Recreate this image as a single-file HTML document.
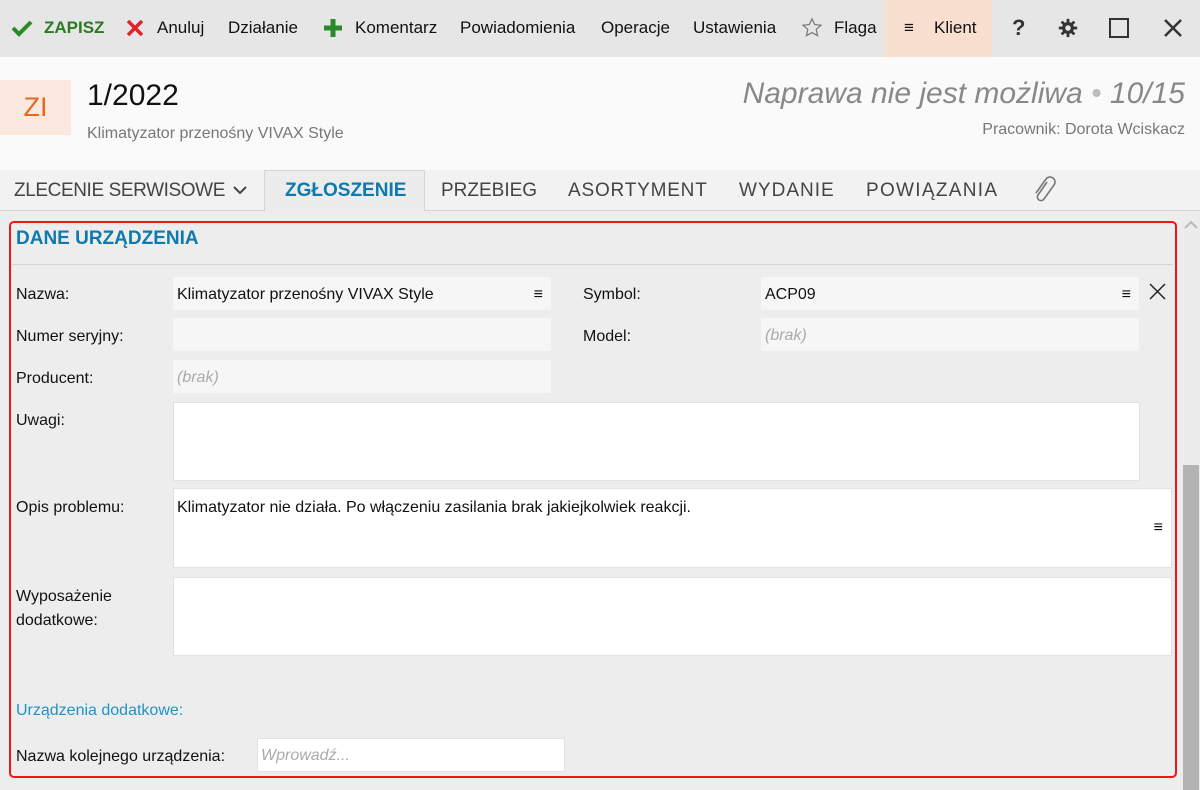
<!DOCTYPE html>
<html><head><meta charset="utf-8"><style>
*{box-sizing:border-box;margin:0;padding:0}
body{width:1200px;height:790px;overflow:hidden;background:#ededed;font-family:"Liberation Sans",sans-serif;color:#111;position:relative}
.a{position:absolute;white-space:nowrap}
.tb{left:0;top:0;width:1200px;height:57px;background:#e6e6e6}
.tb span{position:absolute;top:18px;font-size:17px}
.hd{left:0;top:57px;width:1200px;height:113px;background:#fafafa}
.tabs{left:0;top:170px;width:1200px;height:41px;background:#f2f2f2;border-bottom:1px solid #d6d6d6}
.tab{position:absolute;top:10px;font-size:19px;color:#444}
.lbl{font-size:16px;color:#111}
.in{position:absolute;background:#f6f6f6;height:33px;font-size:16px;padding:8px 4px}
.ta{position:absolute;background:#fff;border:1px solid #e2e2e2}
.ph{color:#aaa;font-style:italic}
</style></head><body>
<div class="a tb">
 <svg class="a" style="left:11px;top:19px" width="22" height="18" viewBox="0 0 22 18"><path d="M2 9 L8 15 L20 3" stroke="#2a8a2a" stroke-width="4" fill="none"/></svg>
 <span style="left:44px;color:#2a7a22;font-weight:bold">ZAPISZ</span>
 <svg class="a" style="left:126px;top:19px" width="18" height="18"><path d="M2 2L16 16M16 2L2 16" stroke="#e0242a" stroke-width="3.5"/></svg>
 <span style="left:157px">Anuluj</span>
 <span style="left:228px">Działanie</span>
 <svg class="a" style="left:323px;top:18px" width="20" height="20"><path d="M10 1V19M1 10H19" stroke="#2a8a2a" stroke-width="5"/></svg>
 <span style="left:355px">Komentarz</span>
 <span style="left:460px">Powiadomienia</span>
 <span style="left:601px">Operacje</span>
 <span style="left:693px">Ustawienia</span>
 <svg class="a" style="left:801px;top:17px" width="22" height="22" viewBox="0 0 24 24"><path d="M12 2l2.9 6.3 6.9.7-5.2 4.6 1.5 6.8L12 17l-6.1 3.4 1.5-6.8L2.2 9l6.9-.7z" fill="none" stroke="#777" stroke-width="1.3"/></svg>
 <span style="left:834px">Flaga</span>
 <div class="a" style="left:885px;top:0;width:107px;height:57px;background:#f8dfcf"></div>
 <span style="left:904px">≡</span><span style="left:934px">Klient</span>
 <span style="left:1012px;font-size:22px;top:15px;color:#333;font-weight:bold">?</span>
 <svg class="a" style="left:1057px;top:17px" width="22" height="22" viewBox="0 0 24 24"><g stroke="#333" stroke-width="3"><path d="M12 2v20M2 12h20M5 5l14 14M19 5L5 19"/></g><circle cx="12" cy="12" r="6.5" fill="#333"/><circle cx="12" cy="12" r="3" fill="#e6e6e6"/></svg>
 <div class="a" style="left:1109px;top:18px;width:20px;height:20px;border:2.5px solid #333"></div>
 <svg class="a" style="left:1163px;top:18px" width="20" height="20"><path d="M2 2L18 18M18 2L2 18" stroke="#333" stroke-width="2.5"/></svg>
</div>
<div class="a hd">
 <div class="a" style="left:0;top:23px;width:71px;height:55px;background:#fbe9df;color:#e06a1e;font-size:27px;text-align:center;line-height:55px">ZI</div>
 <div class="a" style="left:87px;top:22px;font-size:30px;color:#111">1/2022</div>
 <div class="a" style="left:87px;top:68px;font-size:16px;color:#777">Klimatyzator przenośny VIVAX Style</div>
 <div class="a" style="right:15px;top:20px;font-size:30px;color:#888;font-style:italic">Naprawa nie jest możliwa <span style="color:#bbb">•</span> 10/15</div>
 <div class="a" style="right:15px;top:64px;font-size:16px;color:#777">Pracownik: Dorota Wciskacz</div>
</div>
<div class="a tabs">
 <span class="tab" style="left:14px;letter-spacing:-0.4px">ZLECENIE SERWISOWE</span>
 <svg class="a" style="left:233px;top:16px" width="14" height="10"><path d="M1 1L7 7L13 1" stroke="#444" stroke-width="2" fill="none"/></svg>
 <div class="a" style="left:264px;top:0;width:161px;height:41px;background:#ececec;border:1px solid #d6d6d6;border-bottom:none"></div>
 <span class="tab" style="left:285px;color:#0e7aae;font-weight:bold">ZGŁOSZENIE</span>
 <span class="tab" style="left:441px">PRZEBIEG</span>
 <span class="tab" style="left:568px;letter-spacing:0.8px">ASORTYMENT</span>
 <span class="tab" style="left:739px;letter-spacing:1px">WYDANIE</span>
 <span class="tab" style="left:866px;letter-spacing:1.3px">POWIĄZANIA</span>
 <svg class="a" style="left:1032px;top:6px" width="24" height="28" viewBox="0 0 24 28"><path d="M15 6L6 19a3.5 3.5 0 006 4l10-14a5 5 0 00-8-6L4 17" stroke="#777" stroke-width="1.6" fill="none"/></svg>
</div>
<div class="a" style="left:1182px;top:211px;width:18px;height:579px;background:#ececec"></div>
<svg class="a" style="left:1184px;top:220px" width="14" height="10"><path d="M1 8L7 2L13 8" stroke="#bbb" stroke-width="2" fill="none"/></svg>
<div class="a" style="left:1183px;top:465px;width:16px;height:325px;background:#b3b3b3"></div>
<div class="a" style="left:9px;top:221px;width:1168px;height:557px;border:2px solid #f01414;border-radius:5px"></div>
<div class="a" style="left:16px;top:228px;font-size:19px;font-weight:bold;color:#0e7aae">DANE URZĄDZENIA</div>
<div class="a" style="left:12px;top:264px;width:1161px;height:1px;background:#d4d4d4"></div>
<div class="a lbl" style="left:16px;top:286px">Nazwa:</div>
<div class="in" style="left:173px;top:277px;width:378px;padding-top:9px">Klimatyzator przenośny VIVAX Style<span style="position:absolute;right:8px">≡</span></div>
<div class="a lbl" style="left:583px;top:286px">Symbol:</div>
<div class="in" style="left:761px;top:277px;width:378px;padding-top:9px">ACP09<span style="position:absolute;right:8px">≡</span></div>
<svg class="a" style="left:1149px;top:283px" width="17" height="17"><path d="M1 1L16 16M16 1L1 16" stroke="#222" stroke-width="1.5"/></svg>
<div class="a lbl" style="left:16px;top:328px">Numer seryjny:</div>
<div class="in" style="left:173px;top:318px;width:378px"></div>
<div class="a lbl" style="left:583px;top:328px">Model:</div>
<div class="in ph" style="left:761px;top:318px;width:378px;padding-top:9px">(brak)</div>
<div class="a lbl" style="left:16px;top:370px">Producent:</div>
<div class="in ph" style="left:173px;top:360px;width:378px;padding-top:9px">(brak)</div>
<div class="a lbl" style="left:16px;top:412px">Uwagi:</div>
<div class="ta" style="left:173px;top:402px;width:967px;height:79px"></div>
<div class="a lbl" style="left:16px;top:499px">Opis problemu:</div>
<div class="ta" style="left:173px;top:488px;width:999px;height:80px;font-size:16px;padding:10px 3px">Klimatyzator nie działa. Po włączeniu zasilania brak jakiejkolwiek reakcji.<span style="position:absolute;right:8px;top:30px">≡</span></div>
<div class="a lbl" style="left:16px;top:585px;line-height:24px">Wyposażenie<br>dodatkowe:</div>
<div class="ta" style="left:173px;top:577px;width:999px;height:79px"></div>
<div class="a" style="left:16px;top:702px;font-size:16px;color:#1f93c4">Urządzenia dodatkowe:</div>
<div class="a lbl" style="left:16px;top:748px">Nazwa kolejnego urządzenia:</div>
<div class="ta ph" style="left:257px;top:738px;width:308px;height:34px;font-size:16px;padding:8px 3px">Wprowadź...</div>
</body></html>
